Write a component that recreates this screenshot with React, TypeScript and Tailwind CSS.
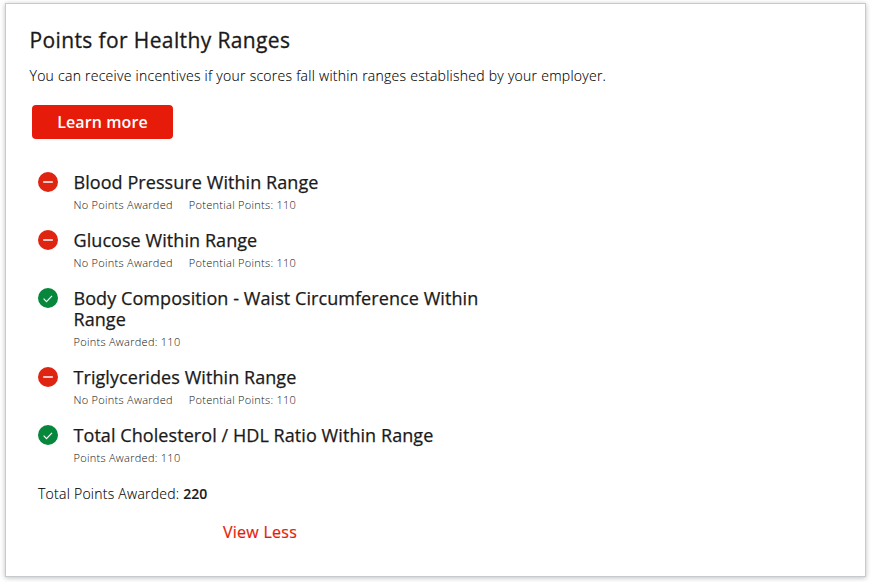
const minus = (
  <svg viewBox="0 0 20 20" className="block size-5 shrink-0" aria-hidden="true">
    <circle cx="10" cy="10" r="10" fill="#df2412" />
    <path d="M5.2 10h9.6" stroke="#fbdcd8" strokeWidth="1.8" />
  </svg>
);
const check = (
  <svg viewBox="0 0 20 20" className="block size-5 shrink-0" aria-hidden="true">
    <circle cx="10" cy="10" r="10" fill="#06873b" />
    <path d="M5.6 10.7l2.9 2.9 5.5-5.8" fill="none" stroke="#fff" strokeWidth="1.2" />
  </svg>
);

const items = [
  { title: "Blood Pressure Within Range", awarded: false },
  { title: "Glucose Within Range", awarded: false },
  { title: "Body Composition - Waist Circumference Within Range", awarded: true },
  { title: "Triglycerides Within Range", awarded: false },
  { title: "Total Cholesterol / HDL Ratio Within Range", awarded: true },
];

export default function App() {
  return (
    <div className="h-[582px] w-[871px] overflow-hidden bg-white pt-[3px] pl-[5px] font-['Open_Sans',sans-serif] text-[#1a1a1a]">
      <section className="h-[574px] w-[861px] border border-[#c5cacc] bg-white pl-[23.5px] pt-[22px] shadow-[0_1px_5px_rgba(0,0,0,0.25)]">
        <h1 className="text-[21px] leading-[28px] tracking-[0.38px] [-webkit-text-stroke:0.3px]">Points for Healthy Ranges</h1>
        <p className="mt-[12px] text-[14px] leading-5 font-light tracking-[0.26px] text-black [-webkit-text-stroke:0.1px]">You can receive incentives if your scores fall within ranges established by your employer.</p>
        <button className="mt-[19px] ml-[2.5px] block h-[34px] w-[141px] rounded-[4px] bg-[#e61b0a] text-[16px] leading-6 font-semibold tracking-[0.1px] text-white">Learn more</button>
        <ul className="mt-[33px] ml-[8.5px] flex w-[460px] flex-col gap-[15px]">
          {items.map((item) => (
            <li key={item.title} className="flex gap-[15.5px]">
              {item.awarded ? check : minus}
              <div className="w-[424px]">
                <h2 className="text-[18px] leading-[21px] tracking-[0.07px] [-webkit-text-stroke:0.25px]">{item.title}</h2>
                <p className="mt-[3px] mb-[2px] flex h-[17px] gap-4 text-[11px] leading-[17px] font-light tracking-[0.28px] text-[#111]">
                  {item.awarded ? (
                    <span>Points Awarded: 110</span>
                  ) : (
                    <>
                      <span>No Points Awarded</span>
                      <span>Potential Points: 110</span>
                    </>
                  )}
                </p>
              </div>
            </li>
          ))}
        </ul>
        <p className="mt-[16px] ml-[8.5px] text-[14px] leading-5 font-light tracking-[0.25px] text-black [-webkit-text-stroke:0.1px]">
          Total Points Awarded: <span className="font-semibold tracking-normal text-[#1a1a1a]">220</span>
        </p>
        <div className="mt-4 w-[461px] text-center text-[16px] leading-6 tracking-[0.27px] text-[#e61b0a] [-webkit-text-stroke:0.2px]">View Less</div>
      </section>
    </div>
  );
}
